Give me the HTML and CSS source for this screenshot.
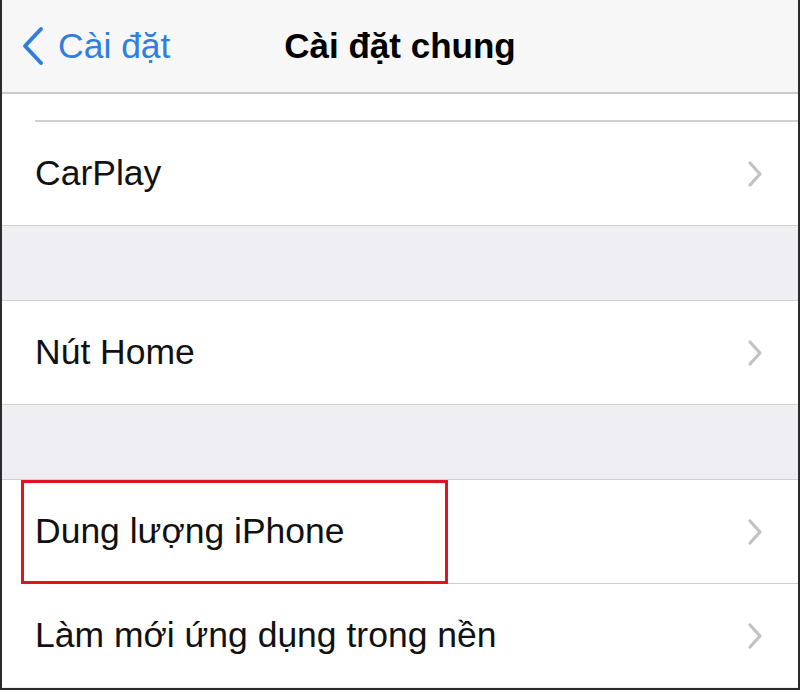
FILE: index.html
```html
<!DOCTYPE html>
<html lang="vi">
<head>
    <meta charset="UTF-8">
    <meta name="viewport" content="width=device-width, initial-scale=1.0">
    <title>Cài đặt chung</title>
    <link rel="stylesheet" href="styles.css">
</head>
<body>
    <div class="screen">
        <div class="navbar">
            <a class="back" href="#">
                <svg class="back-icon" width="26" height="40" viewBox="0 0 26 40">
                    <path d="M21 3 L5 20 L21 37" fill="none" stroke="#2f7ee0" stroke-width="4" stroke-linecap="round" stroke-linejoin="round"/>
                </svg>
                <span>Cài đặt</span>
            </a>
            <h1>Cài đặt chung</h1>
        </div>

        <div class="group">
            <div class="stub"></div>
            <div class="row">
                <span class="label">CarPlay</span>
                <svg class="chev" width="18" height="28" viewBox="0 0 18 28"><path d="M4 3 L14 14 L4 25" fill="none" stroke="#c2c2c6" stroke-width="3.2" stroke-linecap="round" stroke-linejoin="round"/></svg>
            </div>
        </div>

        <div class="gap"></div>

        <div class="group">
            <div class="row">
                <span class="label">Nút Home</span>
                <svg class="chev" width="18" height="28" viewBox="0 0 18 28"><path d="M4 3 L14 14 L4 25" fill="none" stroke="#c2c2c6" stroke-width="3.2" stroke-linecap="round" stroke-linejoin="round"/></svg>
            </div>
        </div>

        <div class="gap"></div>

        <div class="group">
            <div class="row inset">
                <span class="label">Dung lượng iPhone</span>
                <svg class="chev" width="18" height="28" viewBox="0 0 18 28"><path d="M4 3 L14 14 L4 25" fill="none" stroke="#c2c2c6" stroke-width="3.2" stroke-linecap="round" stroke-linejoin="round"/></svg>
                <div class="highlight"></div>
            </div>
            <div class="row">
                <span class="label">Làm mới ứng dụng trong nền</span>
                <svg class="chev" width="18" height="28" viewBox="0 0 18 28"><path d="M4 3 L14 14 L4 25" fill="none" stroke="#c2c2c6" stroke-width="3.2" stroke-linecap="round" stroke-linejoin="round"/></svg>
            </div>
        </div>
    </div>
</body>
</html>
```

FILE: styles.css
```css
html, body {
    margin: 0;
    padding: 0;
}
body {
    font-family: "Liberation Sans", Arial, sans-serif;
    background-color: #2b2b2b;
}
.screen {
    width: 796px;
    height: 688px;
    margin: 0 auto;
    background-color: #efeef3;
    overflow: hidden;
}
.navbar {
    height: 92px;
    background-color: #f7f7f7;
    border-bottom: 2px solid #cacaca;
    display: flex;
    align-items: center;
    position: relative;
}
.back {
    display: flex;
    align-items: center;
    gap: 12px;
    padding-left: 18px;
    color: #2f7ee0;
    text-decoration: none;
    font-size: 35.5px;
}
.navbar h1 {
    position: absolute;
    left: 0;
    right: 0;
    text-align: center;
    margin: 0;
    font-size: 35px;
    font-weight: bold;
    color: #000;
    pointer-events: none;
}
.group {
    background-color: #fff;
    padding-left: 33px;
}
.stub {
    height: 26px;
    border-bottom: 2px solid #d0d0d0;
}
.row {
    height: 103px;
    display: flex;
    align-items: center;
    justify-content: space-between;
    padding-right: 34px;
    position: relative;
}
.row.inset {
    height: 103px;
    border-bottom: 1px solid #cdcdcd;
}
.label {
    font-size: 35.5px;
    color: #111;
}
.gap {
    height: 74px;
    border-top: 1px solid #d0d0d0;
    border-bottom: 1px solid #d0d0d0;
}
.highlight {
    position: absolute;
    left: -14px;
    top: 0;
    width: 421px;
    height: 98px;
    border: 3px solid #e0141e;
}
```
